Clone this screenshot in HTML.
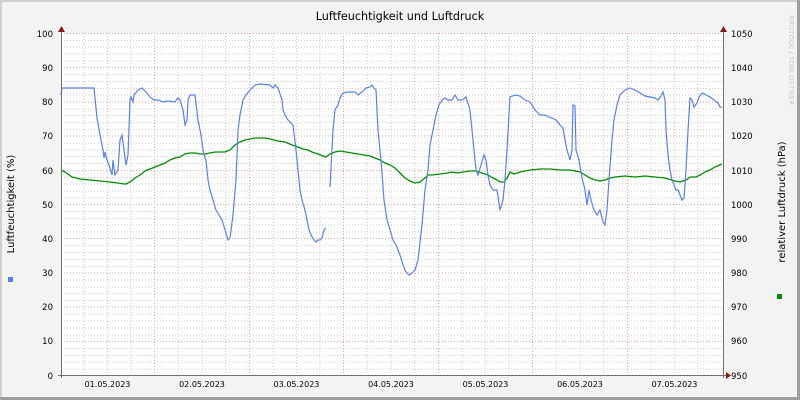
<!DOCTYPE html>
<html><head><meta charset="utf-8"><style>
html,body{margin:0;padding:0;background:#f3f3f3}
svg{display:block}
text{font-family:"DejaVu Sans","Liberation Sans",sans-serif;fill:#000}
</style></head><body>
<svg width="800" height="400" viewBox="0 0 800 400" xmlns="http://www.w3.org/2000/svg">
<rect x="0" y="0" width="800" height="400" fill="#f3f3f3"/>
<rect x="0" y="0" width="2" height="400" fill="#cfcfcf"/>
<rect x="0" y="0" width="800" height="2" fill="#cfcfcf"/>
<rect x="797" y="0" width="3" height="400" fill="#9e9e9e"/>
<rect x="0" y="397" width="800" height="3" fill="#9e9e9e"/>
<rect x="61" y="33" width="662" height="342" fill="#ffffff"/>
<g stroke="#cccccc" stroke-width="1" stroke-dasharray="1,2" shape-rendering="crispEdges">
<path d="M61 40.3H723M61 47.2H723M61 54H723M61 60.9H723M61 74.6H723M61 81.4H723M61 88.3H723M61 95.1H723M61 108.8H723M61 115.7H723M61 122.5H723M61 129.4H723M61 143H723M61 149.9H723M61 156.7H723M61 163.6H723M61 177.3H723M61 184.1H723M61 191H723M61 197.8H723M61 211.5H723M61 218.4H723M61 225.2H723M61 232.1H723M61 245.7H723M61 252.6H723M61 259.4H723M61 266.3H723M61 280H723M61 286.8H723M61 293.7H723M61 300.5H723M61 314.2H723M61 321.1H723M61 327.9H723M61 334.8H723M61 348.4H723M61 355.3H723M61 362.1H723M61 369H723"/>
<path d="M84 33V375M107.5 33V375M131 33V375M178 33V375M202 33V375M225.5 33V375M273 33V375M296.5 33V375M320 33V375M367 33V375M391 33V375M414.5 33V375M462 33V375M485.5 33V375M509 33V375M556 33V375M580 33V375M603.5 33V375M651 33V375M674.5 33V375M698 33V375"/>
</g>
<g stroke="#e5a0a0" stroke-width="1" stroke-dasharray="1,2" shape-rendering="crispEdges">
<path d="M61 33.5H723M61 67.7H723M61 101.9H723M61 136.1H723M61 170.3H723M61 204.5H723M61 238.7H723M61 272.9H723M61 307.1H723M61 341.3H723"/>
<path d="M154.5 33V378M249.5 33V378M343.5 33V378M438.5 33V378M532.5 33V378M627.5 33V378"/>
</g>
<polyline fill="none" stroke="#008c00" stroke-width="1.3" points="61,170 65,172 72,177 80,179 90,180 100,181 110,182 118,183 124,184 126,184 130,182 135,178 140,175 145,171 150,169 155,167 160,165 165,163 170,160 175,158 180,157 185,154 190,153 195,153 200,154 205,154 210,153 215,152 220,152 225,152 230,150 235,145 240,142 245,140 250,139 255,138 260,138 265,138 270,139 278,141 285,142 292,145 298,147 303,149 308,150 312,152 318,154 323,156 326,157 330,154 335,152 340,151 346,152 352,153 358,154 364,155 370,156 375,158 380,160 385,163 390,165 395,168 400,173 405,178 410,181 415,183 420,182 425,178 428,175 432,175 440,174 448,173 452,172 458,173 463,172 470,171 476,171 482,173 488,175 493,178 497,180 500,182 504,182 507,178 510,172 514,174 520,172 530,170 540,169 550,169 560,170 570,170 580,172 585,175 590,178 595,180 600,181 605,180 610,178 615,177 625,176 635,177 645,176 655,177 665,178 675,181 680,182 686,180 690,177 696,177 700,175 705,172 710,170 715,167 722,164"/>
<g fill="none" stroke="#5b7fe6" stroke-width="1.2">
<polyline points="61,95 62,88 94,88 95,98 97,118 101,140 103,150 104,158 105,152 107,160 110,168 112,175 113,160 115,175 118,170 120,140 122,135 124,150 126,165 128,155 130,100 131,97 133,102 134,95 138,90 142,88 146,92 150,97 154,100 158,100 163,102 168,101 175,102 178,98 180,100 183,110 185,125 187,120 188,100 190,95 195,95 198,120 201,135 203,150 205,158 206,160 208,180 210,190 213,200 216,210 219,215 222,220 225,230 228,240 230,238 233,215 236,180 238,130 240,115 243,100 246,95 250,90 255,85 260,84 270,85 273,88 275,85 278,88 282,100 283,110 285,115 288,120 293,125 296,150 300,190 302,200 305,210 307,220 309,230 311,235 314,240 316,242 318,240 320,240 322,238 324,230 326,228"/>
<polyline points="330,187 333,130 335,110 338,105 340,98 343,93 348,92 355,92 358,95 362,92 366,88 370,87 372,85 374,88 376,90 378,130 381,160 384,200 387,220 390,230 393,240 396,245 400,255 403,265 406,272 409,275 412,273 415,270 418,260 422,225 425,190 428,170 430,145 433,130 436,115 439,105 442,100 445,98 448,100 452,100 455,95 458,100 462,100 466,97 470,110 473,140 476,170 478,175 481,165 484,155 486,160 488,175 490,185 493,190 497,190 500,210 503,200 505,180 507,150 510,97 515,95 520,96 525,100 530,102 535,110 540,115 545,115 549,117 552,118 556,120 560,125 563,128 565,140 567,150 570,160 572,150 573,105 575,106 576,150 579,160 582,178 585,190 587,205 589,190 591,200 594,210 597,215 600,210 603,222 605,225 607,210 609,180 612,140 614,120 617,105 620,95 625,90 630,88 635,90 640,93 645,96 650,97 655,98 658,100 661,96 663,92 665,100 666,130 668,155 670,170 672,180 676,190 678,190 680,195 682,200 684,198 686,170 688,130 689,115 690,98 692,100 694,107 697,103 700,95 703,93 706,95 710,97 714,100 718,103 720,107 722,107"/>
</g>
<g stroke="#707070" stroke-width="1" shape-rendering="crispEdges">
<path d="M61.5 30V378M723.5 30V378M58 375.5H727"/>
</g>
<g fill="#8b1a1a">
<path d="M58 32L61.5 26L65 32Z"/>
<path d="M720 32L723.5 26L727 32Z"/>
<path d="M726 372L731 375.5L726 379Z"/>
</g>
<text x="400" y="20" font-size="11.2" text-anchor="middle">Luftfeuchtigkeit und Luftdruck</text>
<g font-size="8.5" text-anchor="end">
<text x="53" y="37">100</text><text x="53" y="71">90</text><text x="53" y="105">80</text><text x="53" y="139">70</text><text x="53" y="174">60</text><text x="53" y="208">50</text><text x="53" y="242">40</text><text x="53" y="276">30</text><text x="53" y="310">20</text><text x="53" y="344">10</text><text x="53" y="379">0</text>
</g>
<g font-size="8.5">
<text x="731" y="37">1050</text><text x="731" y="71">1040</text><text x="731" y="105">1030</text><text x="731" y="139">1020</text><text x="731" y="174">1010</text><text x="731" y="208">1000</text><text x="731" y="242">990</text><text x="731" y="276">980</text><text x="731" y="310">970</text><text x="731" y="344">960</text><text x="731" y="379">950</text>
</g>
<g font-size="8" text-anchor="middle">
<text x="107.5" y="387">01.05.2023</text><text x="202" y="387">02.05.2023</text><text x="296.5" y="387">03.05.2023</text><text x="391" y="387">04.05.2023</text><text x="485.5" y="387">05.05.2023</text><text x="580" y="387">06.05.2023</text><text x="674.5" y="387">07.05.2023</text>
</g>
<text transform="translate(14,204) rotate(-90)" font-size="10" text-anchor="middle">Luftfeuchtigkeit (%)</text>
<text transform="translate(785,202) rotate(-90)" font-size="10" text-anchor="middle">relativer Luftdruck (hPa)</text>
<text transform="translate(789,15) rotate(90)" font-size="7" style="fill:#c8c8c8">RRDTOOL / TOBI OETIKER</text>
<rect x="8" y="277" width="5" height="5" fill="#5b7fe6"/>
<rect x="777" y="294" width="5" height="5" fill="#008c00"/>
</svg>
</body></html>
